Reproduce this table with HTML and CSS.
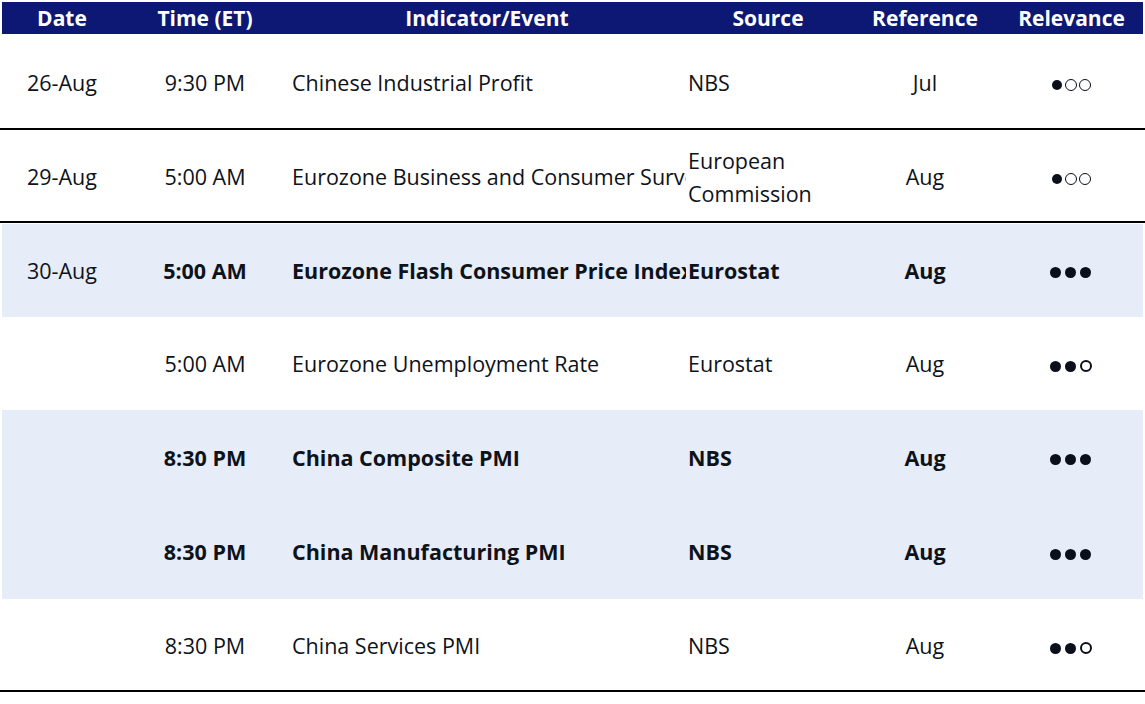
FILE: index.html
```html
<!DOCTYPE html>
<html>
<head>
<meta charset="utf-8">
<link rel="stylesheet" href="styles.css">
</head>
<body>
<div class="sheet">
  <div class="row head">
    <div class="c date">Date</div>
    <div class="c time">Time (ET)</div>
    <div class="c ind">Indicator/Event</div>
    <div class="c src">Source</div>
    <div class="c ref">Reference</div>
    <div class="c rel">Relevance</div>
  </div>
  <div class="row r1 line">
    <div class="c date">26-Aug</div>
    <div class="c time">9:30 PM</div>
    <div class="c ind">Chinese Industrial Profit</div>
    <div class="c src">NBS</div>
    <div class="c ref">Jul</div>
    <div class="c rel"><span class="dots tight"><i class="f"></i><i class="o"></i><i class="o"></i></span></div>
  </div>
  <div class="row r2 line">
    <div class="c date">29-Aug</div>
    <div class="c time">5:00 AM</div>
    <div class="c ind">Eurozone Business and Consumer Surveys</div>
    <div class="c src">European<br>Commission</div>
    <div class="c ref">Aug</div>
    <div class="c rel"><span class="dots tight"><i class="f"></i><i class="o"></i><i class="o"></i></span></div>
  </div>
  <div class="row r3 shade">
    <div class="c date">30-Aug</div>
    <div class="c time b">5:00 AM</div>
    <div class="c ind b">Eurozone Flash Consumer Price Index</div>
    <div class="c src b">Eurostat</div>
    <div class="c ref b">Aug</div>
    <div class="c rel"><span class="dots"><i class="f"></i><i class="f"></i><i class="f"></i></span></div>
  </div>
  <div class="row r4">
    <div class="c date"></div>
    <div class="c time">5:00 AM</div>
    <div class="c ind">Eurozone Unemployment Rate</div>
    <div class="c src">Eurostat</div>
    <div class="c ref">Aug</div>
    <div class="c rel"><span class="dots"><i class="f"></i><i class="f"></i><i class="o"></i></span></div>
  </div>
  <div class="shadegroup">
    <div class="row r5">
      <div class="c date"></div>
      <div class="c time b">8:30 PM</div>
      <div class="c ind b">China Composite PMI</div>
      <div class="c src b">NBS</div>
      <div class="c ref b">Aug</div>
      <div class="c rel"><span class="dots"><i class="f"></i><i class="f"></i><i class="f"></i></span></div>
    </div>
    <div class="row r6">
      <div class="c date"></div>
      <div class="c time b">8:30 PM</div>
      <div class="c ind b">China Manufacturing PMI</div>
      <div class="c src b">NBS</div>
      <div class="c ref b">Aug</div>
      <div class="c rel"><span class="dots"><i class="f"></i><i class="f"></i><i class="f"></i></span></div>
    </div>
  </div>
  <div class="row r7 line">
    <div class="c date"></div>
    <div class="c time">8:30 PM</div>
    <div class="c ind">China Services PMI</div>
    <div class="c src">NBS</div>
    <div class="c ref">Aug</div>
    <div class="c rel"><span class="dots"><i class="f"></i><i class="f"></i><i class="o"></i></span></div>
  </div>
</div>
</body>
</html>
```
FILE: styles.css
```css
html, body {
  margin: 0;
  padding: 0;
  background: #ffffff;
}
body {
  font-family: "Open Sans", "Noto Sans", sans-serif;
  font-size: 21.5px;
  color: #0e1219;
}
.sheet {
  width: 1145px;
  padding-top: 2px;
}
.row {
  display: grid;
  grid-template-columns: 120px 166px 398px 164px 150px 143px;
  align-items: center;
  margin-left: 2px;
  width: 1141px;
}
.c {
  white-space: nowrap;
  overflow: hidden;
  text-align: center;
}
.c.ind, .c.src {
  text-align: left;
}
.c.ind { padding-left: 4px; }
.c.src { padding-left: 2px; white-space: normal; line-height: 33px; }
.b { font-weight: 700; font-size: 21.5px; }
.head {
  height: 32px;
  background: #0c1873;
  color: #ffffff;
  font-weight: 700;
  font-size: 21px;
}
.head .c.ind, .head .c.src { text-align: center; padding-left: 0; }
.line {
  position: relative;
}
.line::after {
  content: "";
  position: absolute;
  left: -2px;
  right: -2px;
  bottom: 0;
  height: 2px;
  background: #000000;
}
.r1 { height: 96px; }
.r2 { height: 93px; }
.r3 { height: 94px; }
.r4 { height: 93px; }
.r5 { height: 94px; }
.r6 { height: 95px; }
.r7 { height: 93px; }
.shade {
  background: linear-gradient(#ffffff 0 1px, #e6ecf8 1px);
}
.shadegroup {
  background: #e6ecf8;
  margin-left: 2px;
  width: 1141px;
}
.shadegroup .row { margin-left: 0; }
.dots {
  display: inline-flex;
  gap: 4px;
  align-items: center;
  vertical-align: middle;
  margin-left: -2px;
}
.dots i {
  display: block;
  width: 11px;
  height: 11px;
  border-radius: 50%;
  box-sizing: border-box;
}
.dots i.f { background: #0b0f1c; }
.dots i.o { width: 12px; height: 12px; border: 2px solid #0b0f1c; }
.dots.tight { gap: 2px; margin-left: 0; }
.dots.tight i.f { width: 10px; height: 10px; margin-right: 1px; }
.dots.tight i.o { width: 12px; height: 12px; border-width: 1.5px; }
```
